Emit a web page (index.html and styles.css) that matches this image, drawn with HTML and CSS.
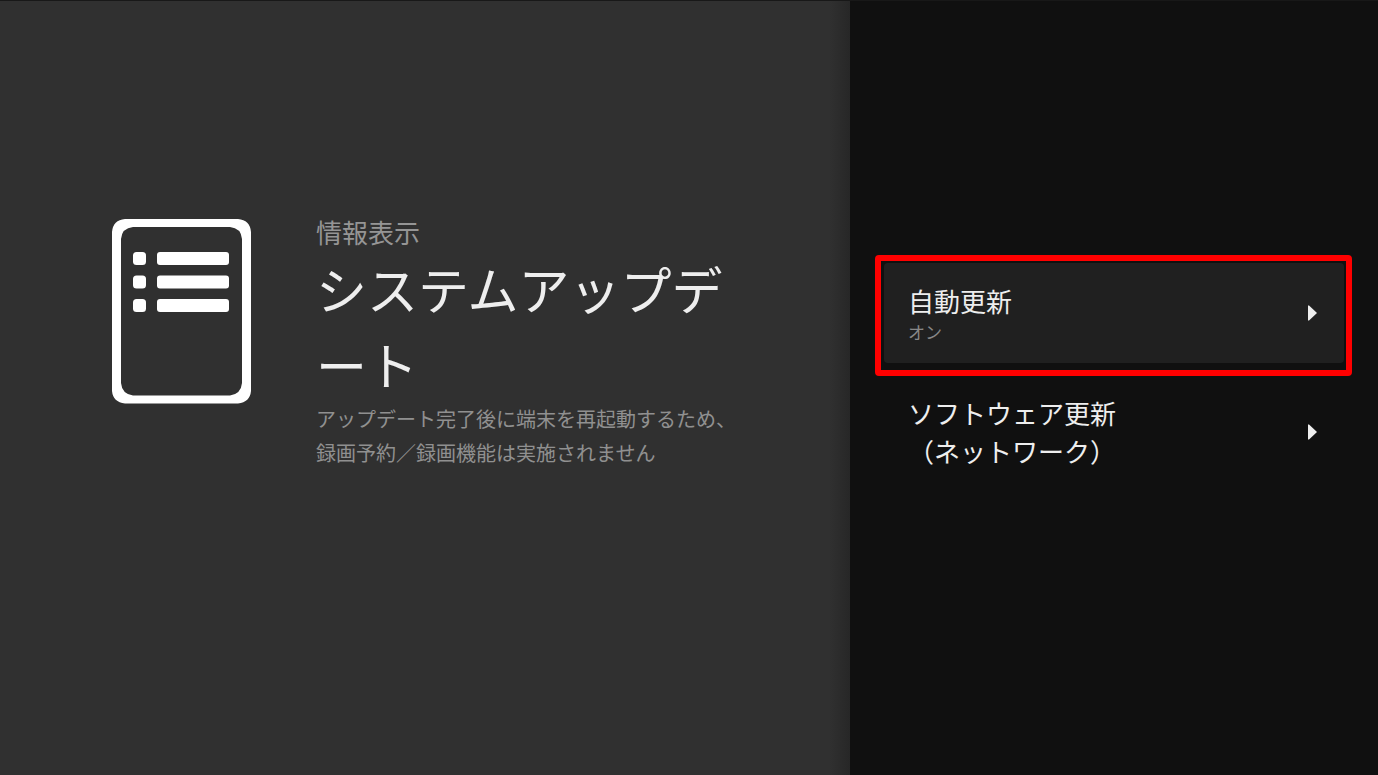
FILE: index.html
```html
<!DOCTYPE html>
<html lang="ja">
<head>
<meta charset="utf-8">
<meta name="viewport" content="width=device-width, initial-scale=1">
<title>システムアップデート</title>
<link rel="stylesheet" href="styles.css">
</head>
<body>
<div class="screen">
  <main class="info">
    <svg class="info-icon" viewBox="0 0 140 186" aria-hidden="true">
      <path fill="#fff" fill-rule="evenodd" d="M14 1H127Q139 2 140 14V173Q139 184 127 185.500H14Q2 184 1 173V14Q2 2 14 1ZM22 9Q11 10 10 21V165Q11 176 22 177.500H119Q130 176 131 165V21Q130 10 119 9Z"/>
      <g fill="#fff">
        <rect x="22" y="34" width="13" height="13" rx="3.500"/>
        <rect x="46" y="34" width="72" height="13" rx="3"/>
        <rect x="22" y="57.500" width="13" height="13" rx="3.500"/>
        <rect x="46" y="57.500" width="72" height="13" rx="3"/>
        <rect x="22" y="81" width="13" height="13" rx="3.500"/>
        <rect x="46" y="81" width="72" height="13" rx="3"/>
      </g>
    </svg>
    <div class="info-text">
      <p class="category">情報表示</p>
      <h1 class="title">システムアップデート</h1>
      <p class="description">アップデート完了後に端末を再起動するため、録画予約／録画機能は実施されません</p>
    </div>
  </main>
  <nav class="menu" aria-label="システムアップデート">
    <div class="highlight">
      <button class="item item-selected" type="button">
        <span class="item-text">
          <span class="item-label">自動更新</span>
          <span class="item-value">オン</span>
        </span>
        <svg class="arrow" viewBox="0 0 10 16" aria-hidden="true"><path d="M0 .5H1L9 8L1 15.500H0Z" fill="#eee"/></svg>
      </button>
    </div>
    <button class="item" type="button">
      <span class="item-text">
        <span class="item-label">ソフトウェア更新<br>（ネットワーク）</span>
      </span>
      <svg class="arrow" viewBox="0 0 10 16" aria-hidden="true"><path d="M0 .5H1L9 8L1 15.500H0Z" fill="#eee"/></svg>
    </button>
  </nav>
</div>
</body>
</html>
```
FILE: styles.css
```css
* {
  box-sizing: border-box;
}

body {
  margin: 0;
  background: #101010;
  color: #eee;
  font-family: "Noto Sans CJK JP", sans-serif;
}

.screen {
  display: grid;
  grid-template-columns: 850fr 528fr;
  min-height: 100vh;
  border-top: 1px solid #181818;
}

.info {
  display: flex;
  align-items: flex-start;
  gap: 65px;
  padding: 213px 24px 24px 111px;
  background: linear-gradient(to left, #272727, #303030 20px);
}

.info-icon {
  flex: none;
  width: 140px;
  height: 186px;
  margin-top: 4px;
}

.info-text {
  max-width: 424px;
}

.category,
.title,
.description {
  margin: 0;
  font-weight: 400;
}

.category {
  color: #959595;
  font-size: 26px;
  line-height: 36px;
}

.title {
  font-size: 51px;
  line-height: 76px;
  line-break: anywhere;
}

.description {
  color: #909090;
  font-size: 20px;
  line-height: 34px;
}

.menu {
  padding: 254px 26px 24px 25px;
}

.highlight {
  padding: 2px 2px 7px 3px;
  border: 6px solid #f00;
  border-radius: 4px;
}

.item {
  display: flex;
  align-items: center;
  justify-content: space-between;
  width: 100%;
  padding: 18px 34px 18px 33px;
  border: 0;
  background: none;
  color: inherit;
  font: inherit;
  text-align: left;
}

.item-selected {
  padding: 19px 26px 19px 24px;
  border-radius: 4px;
  background: #202020;
}

.item-text {
  display: flex;
  flex-direction: column;
}

.item-label {
  font-size: 26px;
  line-height: 38px;
}

.item-value {
  color: #888;
  font-size: 17px;
  line-height: 24px;
}

.arrow {
  flex: none;
  width: 10px;
  height: 16px;
}
```
